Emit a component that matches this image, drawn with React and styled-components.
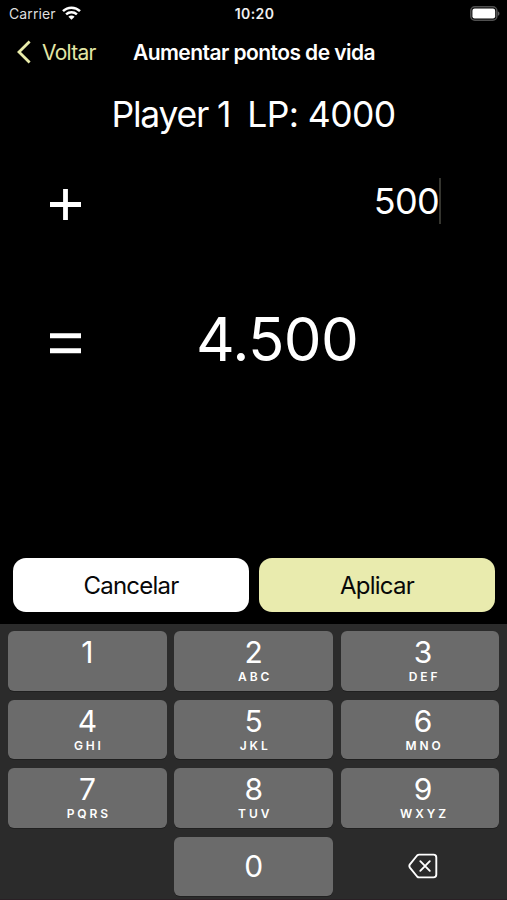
import React from 'react';
import styled, { createGlobalStyle } from 'styled-components';

const GlobalStyle = createGlobalStyle`
  * { box-sizing: border-box; }
  body { margin: 0; background: #000; }
  button { font: inherit; border: 0; padding: 0; margin: 0; }
`;

const Screen = styled.div`
  width: 507px;
  height: 900px;
  overflow: hidden;
  display: flex;
  flex-direction: column;
  background: #000;
  color: #fff;
  font-family: Inter, 'Liberation Sans', sans-serif;
`;

const StatusBar = styled.header`
  height: 27px;
  flex: none;
  display: grid;
  grid-template-columns: 1fr auto 1fr;
  align-items: center;
  padding: 0 7px 0 9px;
  font-size: 14px;
  line-height: 27px;
`;

const Carrier = styled.div`
  display: flex;
  align-items: center;
  gap: 6px;
  color: #dedede;
  letter-spacing: 0.1px;
`;

const Clock = styled.time`
  font-weight: 600;
  letter-spacing: 0.4px;
  color: #f0f0f0;
`;

const BatterySlot = styled.div`
  display: flex;
  justify-content: flex-end;
`;

const NavBar = styled.nav`
  height: 50px;
  flex: none;
  display: flex;
  align-items: center;
  padding: 0 0 0 16px;
`;

const BackButton = styled.button`
  display: flex;
  align-items: center;
  gap: 10px;
  width: 117px;
  background: none;
  color: #e3e6a6;
  font-size: 21px;
  line-height: 28px;
  letter-spacing: -0.75px;
`;

const BackLabel = styled.span`
  padding-top: 2px;
`;

const Title = styled.h1`
  margin: 0;
  padding-top: 2px;
  font-size: 21px;
  font-weight: 600;
  line-height: 28px;
  letter-spacing: -0.56px;
  white-space: nowrap;
`;

const PlayerLine = styled.div`
  height: 74px;
  flex: none;
  display: flex;
  justify-content: center;
  gap: 17px;
  font-size: 35.5px;
  line-height: 75px;
`;

const PlayerName = styled.span`
  letter-spacing: -1.2px;
`;

const LifePoints = styled.span`
  letter-spacing: -0.6px;
`;

const AmountRow = styled.div`
  height: 100px;
  flex: none;
  display: flex;
  align-items: center;
  justify-content: space-between;
  padding: 0 66px 0 50px;
`;

const ResultRow = styled.div`
  height: 176px;
  flex: none;
  display: flex;
  align-items: center;
  padding-left: 50px;
`;

const Operator = styled.div`
  display: flex;
  padding-top: ${(p) => p.$drop}px;
`;

const Amount = styled.div`
  display: flex;
  align-items: center;
  font-size: 36px;
  line-height: 46px;
  letter-spacing: -0.7px;
`;

const Caret = styled.span`
  width: 2px;
  height: 46px;
  background: #35352f;
`;

const Result = styled.div`
  margin-left: 115px;
  font-size: 60px;
  line-height: 72px;
  letter-spacing: -0.6px;
`;

const Actions = styled.div`
  margin-top: auto;
  height: 66px;
  flex: none;
  display: grid;
  grid-template-columns: 1fr 1fr;
  gap: 10px;
  padding: 0 12px 12px 13px;
`;

const ActionButton = styled.button`
  height: 54px;
  padding-top: 1px;
  border-radius: 13px;
  background: ${(p) => (p.$primary ? '#e9ebae' : '#fff')};
  color: #080808;
  font-size: 24px;
  line-height: 53px;
  letter-spacing: -0.75px;
`;

const Keyboard = styled.section`
  height: 276px;
  flex: none;
  display: grid;
  grid-template-columns: repeat(3, 1fr);
  grid-template-rows: repeat(4, 59.5px);
  column-gap: 7.5px;
  row-gap: 9px;
  padding: 7px 7.5px 0 8px;
  background: #2b2b2b;
  border-bottom: 1px solid #2a2025;
`;

const Key = styled.button`
  display: flex;
  flex-direction: column;
  align-items: center;
  justify-content: ${(p) => (p.$centered ? 'center' : 'flex-start')};
  padding-top: ${(p) => (p.$centered ? 0 : '4px')};
  border-radius: 6px;
  background: ${(p) => (p.$plain ? 'none' : '#6b6b6b')};
  box-shadow: ${(p) => (p.$plain ? 'none' : '0 1px 0 #202020')};
  color: #fff;

  &:nth-child(3n) { padding-left: 6px; }
`;

const Digit = styled.span`
  font-size: 30px;
  line-height: 34px;
`;

const Letters = styled.span`
  font-size: 12px;
  line-height: 15px;
  font-weight: 600;
  letter-spacing: 2.9px;
  margin-right: -2.9px;
`;

const KEYS = [
  ['1', ''], ['2', 'ABC'], ['3', 'DEF'],
  ['4', 'GHI'], ['5', 'JKL'], ['6', 'MNO'],
  ['7', 'PQRS'], ['8', 'TUV'], ['9', 'WXYZ'],
];

const WifiIcon = () => (
  <svg width="19" height="15" viewBox="0 0 19 15" fill="none" stroke="#fff" strokeWidth="2.5">
    <path d="M1 5.2C5.7 0.6 13.3 0.6 18 5.2" />
    <path d="M4.1 8.4C7.1 5.6 11.9 5.6 14.9 8.4" />
    <path d="M9.5 13.7L6.4 10.8C8 9.2 11 9.2 12.6 10.8Z" fill="#fff" stroke="none" />
  </svg>
);

const BatteryIcon = () => (
  <svg width="31" height="15" viewBox="0 0 31 15">
    <rect x="1.8" y="0.8" width="26" height="13.4" rx="4" fill="none" stroke="#505050" strokeWidth="1.6" />
    <rect x="3.4" y="2.5" width="22.8" height="10" rx="2.2" fill="#fff" />
    <path d="M28.8 5.2C31 6 31 9 28.8 9.8Z" fill="#606060" />
  </svg>
);

const ChevronIcon = () => (
  <svg width="16" height="24" viewBox="0 0 16 24" fill="none" stroke="#e9ecaa" strokeWidth="2.8">
    <path d="M13.6 1.4L3 12L13.6 22.6" />
  </svg>
);

const PlusIcon = () => (
  <svg width="31" height="31" viewBox="0 0 31 31" fill="#fff">
    <path d="M13.1 0H17.9V13.1H31V17.9H17.9V31H13.1V17.9H0V13.1H13.1Z" />
  </svg>
);

const EqualsIcon = () => (
  <svg width="31" height="21" viewBox="0 0 31 21" fill="#fff">
    <path d="M0 0.3H31V5.3H0ZM0 15.3H31V20.3H0Z" />
  </svg>
);

const DeleteIcon = () => (
  <svg width="30" height="26" viewBox="0 0 30 26" fill="none" stroke="#fff" strokeWidth="1.9" strokeLinecap="round" strokeLinejoin="round">
    <path d="M11.2 1.6H25.5Q28.3 1.6 28.3 4.4V21.6Q28.3 24.4 25.5 24.4H11.2Q10 24.4 9.1 23.5L1.9 14.6Q0.8 13 1.9 11.4L9.1 2.5Q10 1.6 11.2 1.6Z" />
    <path d="M12.3 8.2L21.8 17.8M21.8 8.2L12.3 17.8" />
  </svg>
);

export default function App() {
  return (
    <Screen>
      <GlobalStyle />
      <StatusBar>
        <Carrier>Carrier <WifiIcon /></Carrier>
        <Clock>10:20</Clock>
        <BatterySlot><BatteryIcon /></BatterySlot>
      </StatusBar>
      <NavBar>
        <BackButton><ChevronIcon /><BackLabel>Voltar</BackLabel></BackButton>
        <Title>Aumentar pontos de vida</Title>
      </NavBar>
      <PlayerLine>
        <PlayerName>Player 1</PlayerName>
        <LifePoints>LP: 4000</LifePoints>
      </PlayerLine>
      <AmountRow>
        <Operator $drop={7}><PlusIcon /></Operator>
        <Amount>500<Caret /></Amount>
      </AmountRow>
      <ResultRow>
        <Operator $drop={9}><EqualsIcon /></Operator>
        <Result>4.500</Result>
      </ResultRow>
      <Actions>
        <ActionButton>Cancelar</ActionButton>
        <ActionButton $primary>Aplicar</ActionButton>
      </Actions>
      <Keyboard>
        {KEYS.map(([digit, letters]) => (
          <Key key={digit}>
            <Digit>{digit}</Digit>
            {letters && <Letters>{letters}</Letters>}
          </Key>
        ))}
        <span />
        <Key $centered><Digit>0</Digit></Key>
        <Key $plain $centered aria-label="Apagar"><DeleteIcon /></Key>
      </Keyboard>
    </Screen>
  );
}
